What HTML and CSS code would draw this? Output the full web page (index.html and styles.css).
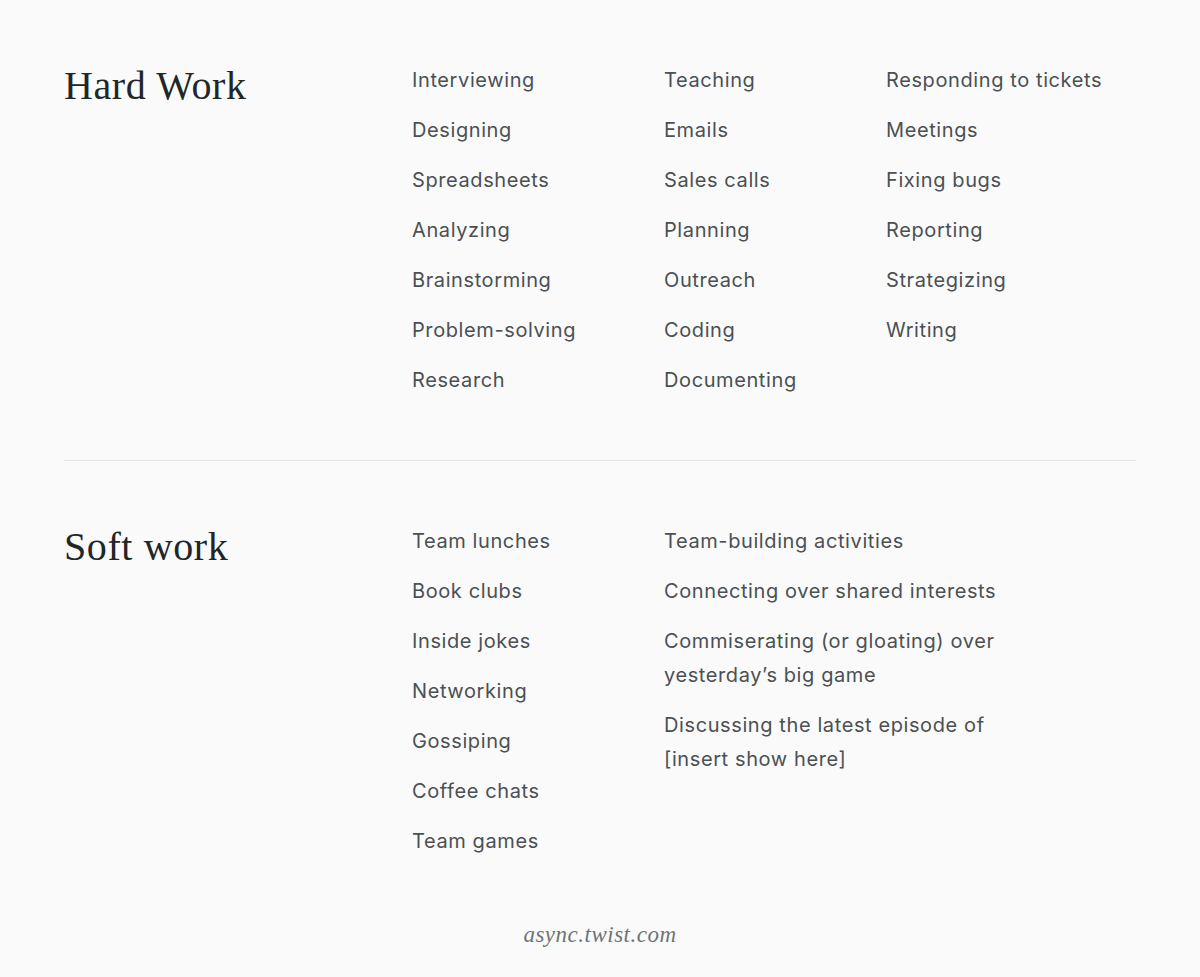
FILE: index.html
```html
<!DOCTYPE html>
<html lang="en">
<head>
    <meta charset="UTF-8">
    <meta name="viewport" content="width=device-width, initial-scale=1.0">
    <title>Hard Work vs Soft Work</title>
    <link rel="stylesheet" href="styles.css">
</head>
<body>
    <div class="page">
        <section class="section hard">
            <h2>Hard Work</h2>
            <ul>
                <li>Interviewing</li>
                <li>Designing</li>
                <li>Spreadsheets</li>
                <li>Analyzing</li>
                <li>Brainstorming</li>
                <li>Problem-solving</li>
                <li>Research</li>
            </ul>
            <ul>
                <li>Teaching</li>
                <li>Emails</li>
                <li>Sales calls</li>
                <li>Planning</li>
                <li>Outreach</li>
                <li>Coding</li>
                <li>Documenting</li>
            </ul>
            <ul>
                <li>Responding to tickets</li>
                <li>Meetings</li>
                <li>Fixing bugs</li>
                <li>Reporting</li>
                <li>Strategizing</li>
                <li>Writing</li>
            </ul>
        </section>

        <section class="section soft">
            <h2>Soft work</h2>
            <ul>
                <li>Team lunches</li>
                <li>Book clubs</li>
                <li>Inside jokes</li>
                <li>Networking</li>
                <li>Gossiping</li>
                <li>Coffee chats</li>
                <li>Team games</li>
            </ul>
            <ul class="wide">
                <li>Team-building activities</li>
                <li>Connecting over shared interests</li>
                <li>Commiserating (or gloating) over yesterday’s big game</li>
                <li>Discussing the latest episode of [insert show here]</li>
            </ul>
        </section>

        <footer class="footer">async.twist.com</footer>
    </div>
</body>
</html>
```

FILE: styles.css
```css
body {
    margin: 0;
    background-color: #fafafa;
    font-family: Inter, "Noto Sans", sans-serif;
}
.page {
    padding: 0 64px;
}
.section {
    display: grid;
    grid-template-columns: 348px 252px 222px auto;
    align-items: start;
    padding: 63px 0;
}
.section + .section {
    border-top: 1px solid #e2e4e4;
    padding-bottom: 62px;
}
.soft {
    grid-template-columns: 348px 252px 345px;
}
h2 {
    margin: -1px 0 0;
    font-family: "Liberation Serif", "Times New Roman", serif;
    font-weight: normal;
    font-size: 40px;
    line-height: 48px;
    letter-spacing: 0.6px;
    color: #212627;
}
ul {
    list-style: none;
    margin: 0;
    padding: 0;
    display: flex;
    flex-direction: column;
    gap: 16px;
}
li {
    font-size: 20px;
    line-height: 34px;
    letter-spacing: 0.6px;
    color: #4a5053;
}
.footer {
    text-align: center;
    font-family: "Liberation Serif", "Times New Roman", serif;
    font-style: italic;
    font-size: 23px;
    line-height: 30px;
    letter-spacing: 0.5px;
    color: #6d7477;
}
```
